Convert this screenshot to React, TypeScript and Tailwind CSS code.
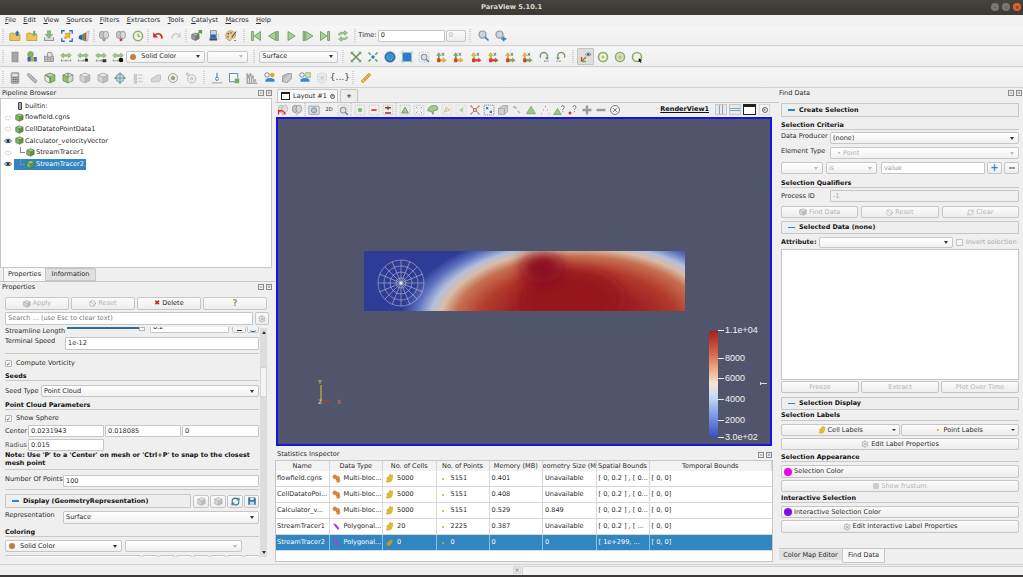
import type { ReactNode } from "react";
import { Ban, RefreshCw, Settings } from "lucide-react";

const folder = (
  <path d="M1 5V14H14.5V6H8L6.5 4H2Z" fill="#eec458" stroke="#a8862f" strokeWidth=".8" />
);
const cube = (a: string, b: string, c: string, s: string) => (
  <>
    <path d="M8 1.5 14.5 4V11.5L8 14.5 1.5 11.5V4Z" fill={b} stroke={s} strokeWidth=".8" />
    <path d="M1.5 4 8 6.8 14.5 4 8 1.5Z" fill={c} stroke={s} strokeWidth=".5" />
    <path d="M8 6.8V14.5L1.5 11.5V4Z" fill={a} stroke={s} strokeWidth=".5" />
  </>
);
const greenCube = cube("#7fb35f", "#5f9245", "#a2cc86", "#43682f");
const greyCube = cube("#d4d4d4", "#bdbdbd", "#e6e6e6", "#9a9a9a");
const grey = "#b4b4b4";
const green = "#86b070";
const greenDark = "#5f8f4c";
const vcr = (d: string) => <path d={d} fill="#a9cf94" stroke={greenDark} strokeWidth="1" />;
const srv = (dot: string) => (
  <>
    <ellipse cx="5.5" cy="6.5" rx="3.7" ry="5" fill="#c4c4c4" stroke="#8f8f8f" />
    <ellipse cx="10.5" cy="6.5" rx="3.7" ry="5" fill="#d6d6d6" stroke="#8f8f8f" />
    <circle cx="8" cy="13" r="2" fill={dot} />
  </>
);
const ring = (
  <>
    <circle cx="8" cy="8" r="6" fill="#f3f2e4" stroke={green} strokeWidth="2.2" />
    <circle cx="8" cy="8" r="2" fill="#d9b23c" />
  </>
);
const rangeArrow = (extra?: ReactNode) => (
  <>
    <path d="M1 6 4.5 3V5H11.5V3L15 6 11.5 9V7H4.5V9Z" fill="#a7cf90" stroke={greenDark} strokeWidth=".7" />
    <path d="M1 13H15M2 11V14M8 11V14M14 11V14" stroke="#777" strokeWidth=".8" fill="none" />
    {extra}
  </>
);
const axis = (up: string, across: string) => (
  <>
    <path d="M5 2 8 6H6V11H4V6H2Z" fill={up} stroke="#8f7a25" strokeWidth=".4" />
    <path d="M3 11H11V9L15 12.5 11 15V13.5H3Z" fill={across} stroke="#8f7a25" strokeWidth=".4" />
    <rect x="3" y="10" width="4" height="5" fill="#d33a2c" />
    <path d="M9 2.5 12 6.5M12 2.5 9 6.5" stroke="#444" strokeWidth=".9" />
  </>
);
const rot = (flip: boolean) => (
  <g transform={flip ? "matrix(-1 0 0 1 16 0)" : undefined}>
    <path d="M3.5 9A4.8 4.8 0 1 1 12 9" fill="none" stroke="#7c9a6c" strokeWidth="1.8" />
    <path d="M9.5 8.5H14.5L12 12Z" fill="#6d8a5e" />
    <path d="M8 13.5H14" stroke="#777" strokeWidth="1.4" strokeDasharray="1 .8" />
  </g>
);
const dashBox = (inner: ReactNode, c = "#b8b8b8") => (
  <>
    <rect x="1.5" y="1.5" width="13" height="13" fill="none" stroke={c} strokeDasharray="1.4 1.2" />
    {inner}
  </>
);
const mag = (c: string, h: string) => (
  <>
    <circle cx="6.5" cy="6.5" r="4.7" fill="#d8dde2" stroke={c} strokeWidth="1.7" />
    <path d="M10 10 14.5 14.5" stroke={h} strokeWidth="2.2" />
  </>
);

const icons: Record<string, ReactNode> = {
  open: (
    <>
      {folder}
      <path d="M11 .5 14.5 4.5H12.5V8H9.5V4.5H7.5Z" fill="#2a78b8" />
    </>
  ),
  load: (
    <>
      {folder}
      <path d="M11 8.5 14.5 4.5H12.5V1H9.5V4.5H7.5Z" fill="#79ab63" />
    </>
  ),
  save: (
    <>
      <path d="M2 9.5V14H14V9.5" fill="#ddd" stroke="#989898" strokeWidth="1.4" />
      <path d="M6 1H10V6H13L8 11 3 6H6Z" fill="#93bb80" stroke={greenDark} strokeWidth=".7" />
    </>
  ),
  auto: (
    <>
      <path d="M1 5V1H5M11 1H15V5M15 11V15H11M5 15H1V11" fill="none" stroke="#2b6fb0" strokeWidth="1.7" />
      <path d="M12.5 3.5 11 11 9 9 6 12 4 10 7 7 5 5Z" fill="#eeba2c" stroke="#a27f1a" strokeWidth=".6" />
    </>
  ),
  wedge: (
    <>
      <path d="M1 8 6 5.5V13.5L1 11.5Z" fill="#2c5aa8" />
      <path d="M6 5.5 9 4V14.5L6 13.5Z" fill="#3c9a4a" />
      <path d="M9 4 11 3V15L9 14.5Z" fill="#d8392b" />
      <path d="M11 3 15 1 13 15H11Z" fill="#dcdcdc" stroke="#888" strokeWidth=".5" />
    </>
  ),
  srvA: srv("#7aa866"),
  srvB: srv("#b34a44"),
  clock: (
    <>
      <circle cx="8" cy="8" r="6.2" fill="#f5f1dc" stroke={green} strokeWidth="2" />
      <path d="M8 4.5V8.5H11" fill="none" stroke="#6a8a58" strokeWidth="1.1" />
    </>
  ),
  undo: (
    <>
      <path d="M4.5 6.5C8 3.5 13 5 13.5 11.5" fill="none" stroke="#d42a22" strokeWidth="2.2" />
      <path d="M1.5 3V10H8Z" fill="#d42a22" />
    </>
  ),
  redo: (
    <g transform="matrix(-1 0 0 1 16 0)">
      <path d="M4.5 6.5C8 3.5 13 5 13.5 11.5" fill="none" stroke="#cfcfcf" strokeWidth="2.2" />
      <path d="M1.5 3V10H8Z" fill="#cfcfcf" />
    </g>
  ),
  cubeScript: (
    <>
      <g transform="translate(0 3) scale(.75)">{cube("#9a9a9a", "#777", "#b5b5b5", "#555")}</g>
      <path d="M8 6 13 1.5M10 1H14V5" fill="none" stroke="#5c9a4c" strokeWidth="1.8" />
    </>
  ),
  monitor: (
    <>
      <rect x="3" y="1" width="8" height="9.5" fill="#c9d6e4" stroke="#555" strokeWidth=".7" />
      <rect x="3.5" y="6" width="7" height="4.5" fill="#2c63b8" />
      <rect x="2" y="11" width="10" height="3" fill="#3b4e6c" />
      <path d="M13 6H15M13 9H15M13 12H15" stroke="#888" strokeWidth=".8" />
    </>
  ),
  palette: (
    <>
      <path d="M7.5 1C3 1 .8 4.5 1 8c.2 3.5 3 6.5 6 6 1.8-.3.5-2.5 2-3 2-.6 4.5.5 5-3C14.5 4.5 11.5 1 7.5 1Z" fill="#eccd97" stroke="#8a6a3c" strokeWidth=".7" />
      <circle cx="4.5" cy="5" r="1.3" fill="#c4392c" />
      <circle cx="8" cy="3.8" r="1.2" fill="#3a7fc2" />
      <circle cx="4" cy="9" r="1.2" fill="#4aa04a" />
      <path d="M15 2 9 9.5" stroke="#6a4a2c" strokeWidth="1.4" />
      <path d="M12 14H15" stroke="#444" strokeWidth=".8" />
    </>
  ),
  first: vcr("M2 2H4.5V14H2ZM14 2V14L5.5 8Z"),
  prev: vcr("M13 2H15V14H13ZM11.5 2V14L2 8Z"),
  play: vcr("M4 2 13.5 8 4 14Z"),
  next: vcr("M1.5 2H3.5V14H1.5ZM5 2V14L14.5 8Z"),
  last: vcr("M11.5 2H14V14H11.5ZM2 2V14L10.5 8Z"),
  loop: (
    <>
      <path d="M2 7C2 4 4 3 7 3H10V1L14 4 10 7V5H7C5 5 4 6 4 7.5" fill="#a9cf94" stroke={greenDark} strokeWidth=".7" />
      <path d="M14 9C14 12 12 13 9 13H6V15L2 12 6 9V11H9C11 11 12 10 12 8.5" fill="#a9cf94" stroke={greenDark} strokeWidth=".7" />
    </>
  ),
  zoomData: (
    <>
      <circle cx="6" cy="6" r="4.7" fill="#cdd4dc" stroke="#8f98a2" strokeWidth="1.6" />
      <path d="M9.5 9.5 14 14" stroke="#2d7fc4" strokeWidth="2.2" />
    </>
  ),
  zoomPlus: (
    <>
      <circle cx="6" cy="6" r="4.7" fill="#cdd4dc" stroke="#8f98a2" strokeWidth="1.6" />
      <path d="M11.5 8.5V15M8.5 11.8H15" stroke="#2d7fc4" strokeWidth="2.2" />
    </>
  ),
  calcGrey: <rect x="4" y="1.5" width="8" height="13" fill="#a6a6a6" stroke="#8c8c8c" />,
  rescale: (
    <>
      <circle cx="6" cy="4.5" r="3.8" fill="#84b666" stroke="#4f7f3c" strokeWidth=".6" />
      <rect x="2" y="8" width="4.5" height="6" fill="#2f67b3" />
      <rect x="6.5" y="8" width="4" height="6" fill="#d4a92c" />
      <rect x="10.5" y="8" width="4" height="6" fill="#3b77c2" />
    </>
  ),
  lockGrey: (
    <>
      <rect x="2" y="7" width="12" height="7" fill="#c2c2c2" stroke="#888" />
      <circle cx="9" cy="5" r="3.5" fill="#e2e2e2" stroke="#777" />
      <path d="M2 11H14M6 7V14M10 7V14" stroke="#888" strokeWidth=".6" />
    </>
  ),
  range: rangeArrow(),
  rangeC: rangeArrow(<circle cx="12.5" cy="12" r="2.3" fill="#333" />),
  rangeT: rangeArrow(<path d="M10 11H15V15H10Z" fill="#333" />),
  rangeD: rangeArrow(<circle cx="12" cy="12" r="3" fill="#111" />),
  reset: (
    <>
      <path d="M3 3 13 13M13 3 3 13" stroke="#6c8a5e" strokeWidth="2" />
      <path d="M1 1H5L1 5ZM15 1V5L11 1ZM1 15V11L5 15ZM15 15H11L15 11Z" fill="#6aa158" />
    </>
  ),
  closest: (
    <>
      <circle cx="8" cy="8" r="2.3" fill="#2d7fc4" />
      <path d="M2 2 5 5M14 2 11 5M2 14 5 11M14 14 11 11" stroke="#6aa158" strokeWidth="2.2" />
    </>
  ),
  sphere: (
    <>
      <circle cx="8" cy="8" r="7" fill="#2b79bf" stroke="#1f5f99" strokeWidth=".6" />
      <circle cx="8" cy="8" r="4" fill="#3b8ed0" stroke="#a9cf94" strokeDasharray="1.5 1.5" />
    </>
  ),
  blueSq: (
    <>
      <rect x="2" y="2" width="12" height="12" rx="2" fill="#2b7fca" />
      <path d="M1 1H4M12 1H15M1 15H4M12 15H15M1 1V4M15 1V4M1 12V15M15 12V15" stroke="#a9cf94" strokeWidth="1.2" />
    </>
  ),
  zoomBox: dashBox(<g transform="translate(3 3) scale(.8)">{mag("#8c98a4", "#4786bb")}</g>),
  px: axis("#79ab63", "#eeba2c"),
  mx: axis("#79ab63", "#eeba2c"),
  py: axis("#eeba2c", "#d33a2c"),
  my: axis("#eeba2c", "#d33a2c"),
  pz: axis("#eeba2c", "#79ab63"),
  mz: axis("#eeba2c", "#79ab63"),
  rotP: rot(false),
  rotM: rot(true),
  camera: (
    <>
      <path d="M2 14 8 8" stroke="#a97c28" strokeWidth="1.8" fill="none" />
      <path d="M2 8V14" stroke="#d8392b" strokeWidth="1.8" />
      <path d="M2 14H8" stroke="#6aa158" strokeWidth="1.8" />
      <path d="M7 4.5C9 2 13 2 15 4.5 13 7 9 7 7 4.5Z" fill="#d8dde2" stroke="#555" strokeWidth=".7" />
      <circle cx="11" cy="4.5" r="1.5" fill="#2c4f80" />
    </>
  ),
  ring,
  ringDot: (
    <>
      {ring}
      <circle cx="8" cy="8" r="3.2" fill="none" stroke="#8a8a4a" strokeWidth=".6" />
    </>
  ),
  ringCursor: (
    <>
      <circle cx="8" cy="8" r="6" fill="#f3f2e4" stroke={green} strokeWidth="2.2" />
      <path d="M10.5 9.5 15 12.5 12.8 13 14 15.5H12.5L11.5 13.5 10 15Z" fill="#111" />
    </>
  ),
  calc: (
    <>
      <rect x="3" y="1" width="10" height="14" rx="1" fill="#b5b5b5" stroke="#7c7c7c" />
      <rect x="4.5" y="2.5" width="7" height="3" fill="#e5e5e5" />
      <path d="M5 7.5H6.5M7.5 7.5H9M10 7.5H11.5M5 10H6.5M7.5 10H9M10 10H11.5M5 12.5H6.5M7.5 12.5H9M10 12.5H11.5" stroke="#555" strokeWidth="1.3" />
    </>
  ),
  capsule: (
    <>
      <path d="M4 2 14 11C15.5 13 13 15.5 11 14L2 5C1 3 2.5 1 4 2Z" fill="#bebebe" stroke="#909090" />
      <path d="M6 3 14 12M4 5 12 14" stroke="#8c8c8c" strokeWidth=".5" />
    </>
  ),
  cubeG: (
    <>
      {cube("#eaeaea", "#8fbf71", "#b9d8a4", "#4f6b42")}
      <path d="M3 5 8 8V13" stroke="#43682f" fill="none" />
    </>
  ),
  cubeH: (
    <>
      {cube("#8fbf71", "#d8d8d8", "#d4e4c8", "#4f6b42")}
      <path d="M8 2V7" stroke="#43682f" />
    </>
  ),
  cubeGrey: greyCube,
  globe: (
    <>
      <circle cx="8" cy="8" r="5.5" fill="#c7d3dc" stroke="#4d88b8" strokeWidth="1.2" />
      <path d="M8 1V15M1 8H15" stroke="#6c8fa8" />
      <circle cx="8" cy="1.8" r="1.3" fill="#79ab63" />
      <circle cx="8" cy="14.2" r="1.3" fill="#79ab63" />
      <circle cx="1.8" cy="8" r="1.3" fill="#79ab63" />
      <circle cx="14.2" cy="8" r="1.3" fill="#79ab63" />
    </>
  ),
  listG: (
    <path d="M3 3H6V6H3ZM8 4H14M3 7.5H6V10.5H3ZM8 8.5H14M3 12H6V15H3ZM8 13H14" stroke={grey} fill="#dfdfdf" />
  ),
  wedgeG: <path d="M2 13V9L10 4H14V10L12 13Z" fill="#d6d6d6" stroke={grey} />,
  dial: (
    <>
      <circle cx="8" cy="8" r="6" fill="#eee" stroke="#9a9a9a" strokeWidth="1.2" />
      <circle cx="8" cy="8" r="2.5" fill="#86b070" stroke="#777" strokeWidth=".5" />
    </>
  ),
  dial2: (
    <>
      <circle cx="9" cy="9" r="5.5" fill="#f1f1f1" stroke={grey} strokeWidth="1.2" />
      <circle cx="3.5" cy="3" r="1.8" fill="#ddd" stroke={grey} />
      <circle cx="9" cy="9" r="1.8" fill="#ddd" stroke={grey} />
    </>
  ),
  plotLine: (
    <>
      <path d="M1 14.5H15" stroke="#888" />
      <path d="M8 1V12" stroke="#2d7fc4" strokeWidth="1.4" />
      <circle cx="8" cy="9" r="2" fill="#fff" stroke="#2d7fc4" />
    </>
  ),
  plotBox: (
    <>
      <rect x="2" y="2" width="11" height="11" fill="#f4f4f4" stroke="#5f87ad" strokeWidth="1.2" />
      <rect x="9" y="9" width="6" height="6" fill="#79ab63" />
    </>
  ),
  hist: <path d="M2 15V8H4V15ZM5 15V2H7V15ZM8 15V5H10V15ZM11 15V10H13V15ZM1 1V15.5H15.5" fill="#a8a8a8" stroke="#8c8c8c" strokeWidth=".5" />,
  timeA: (
    <>
      <circle cx="4" cy="4" r="3" fill="#f2f2f2" stroke="#333" strokeWidth=".7" />
      <circle cx="11" cy="4" r="3" fill="#d9a62e" />
      <path d="M2 10C6 7.5 10 7.5 14 10V13H2Z" fill="#3d87c8" />
    </>
  ),
  stripes: (
    <>
      <path d="M2 13V5L9 2 14 2V9L9 14Z" fill="#bdbdbd" stroke="#909090" />
      <path d="M4 12 13 3M6 13 14 5" stroke="#e9e9e9" />
    </>
  ),
  timeB: (
    <>
      <circle cx="4" cy="4" r="3" fill="#f2f2f2" stroke="#333" strokeWidth=".7" />
      <rect x="9" y="1" width="6" height="6" fill="#cfe0c8" stroke="#79ab63" />
      <path d="M2 10C6 7.5 10 7.5 14 10V13H2Z" fill="#3d87c8" />
    </>
  ),
  shield: (
    <>
      <path d="M8 1 14 3V9C14 12 11 14 8 15 5 14 2 12 2 9V3Z" fill="#ececec" stroke="#d2d2d2" />
      <path d="M8 4V12M4.5 6 11.5 10M11.5 6 4.5 10" stroke="#c8c8c8" />
    </>
  ),
  ruler: (
    <>
      <path d="M1.5 12 12 1.5 14.5 4 4 14.5Z" fill="#e9bb45" stroke="#a48229" strokeWidth=".8" />
      <path d="M5 9 6.5 10.5M7.5 6.5 9 8M10 4 11.5 5.5" stroke="#8f6f1e" strokeWidth=".8" />
    </>
  ),
  camUndo: (
    <>
      <g opacity=".6">{srv("#999")}</g>
      <path d="M2 14V9H7M3 9.5C6 8 10 9 11 14" fill="none" stroke="#d42a22" strokeWidth="1.7" />
    </>
  ),
  camRedo: srv("#c5c5c5"),
  shot: (
    <>
      <rect x="1" y="3" width="14" height="11" rx="1" fill="#d9dde2" stroke="#9a9a9a" />
      <circle cx="8" cy="8.5" r="3.5" fill="#b8c4cf" stroke="#6a8096" />
      <path d="M1 1.5H15" stroke="#bbb" strokeDasharray="1.5 1.5" />
    </>
  ),
  sel1: dashBox(<circle cx="8" cy="8" r="3" fill="#8ab87a" />),
  sel2: dashBox(<rect x="4.5" y="7" width="7" height="2.2" fill="#c8382f" />),
  sel3: dashBox(<path d="M4 5H12M8 3V8M4 12H12" stroke="#8c3a30" strokeWidth="1.7" />),
  sel4: dashBox(<path d="M8 4 12.5 12H3.5Z" fill="#a5c68f" stroke="#6a8e58" />),
  sel5: dashBox(<path d="M4 4 6 6M12 4 10 6M4 12 6 10M12 12 10 10" stroke="#8f8f8f" />),
  sel6: <path d="M1 9C1 4 6 2 10 2 14 2 15 5 14 8L9 9 8 14 6 10Z" fill="#a5c68f" stroke="#6a8e58" />,
  sel7: dashBox(<path d="M4 11 7 4 12 8Z" fill="#ecdcc8" stroke="#c9b49a" />, "#d4c7b4"),
  sel8: dashBox(<path d="M5 8 11 4V12Z" fill="#b6cfa4" />, "#cfcfcf"),
  sel9: <path d="M2 2 5 5M14 2 11 5M2 14 5 11M14 14 11 11M6 6H10V10H6Z" stroke="#b8806a" strokeWidth="1.5" fill="#e4c8b8" />,
  sel10: dashBox(<path d="M4 4H7V7H4ZM9 9H12V12H9Z" fill="#2d7fc4" />, "#666"),
  sel11: <path d="M2 13V6L8 2H14V10L10 14H2ZM2 6H10V14M10 6 14 2" fill="#cfcfcf" stroke="#a0a0a0" />,
  hover: <path d="M3 3 6 6M4.5 3 7.5 6M9 9 12 12" stroke="#b4b4b4" strokeWidth="1.5" />,
  tri: <path d="M8 3 14 13H2Z" fill="#9fc58a" stroke={greenDark} strokeWidth=".8" />,
  triDots: <path d="M8 3.5H8.8M3 13H3.8M13 13H13.8M5.5 8H6.3M10.5 8H11.3" stroke="#555" strokeWidth="1.6" />,
  triQ: (
    <>
      <path d="M6 6 11 14H1Z" fill="#9fc58a" stroke={greenDark} strokeWidth=".8" />
      <path d="M11 4C11 1.5 15 1.5 15 4 15 6 13 6 13 8M13 9.5V11" fill="none" stroke="#666" strokeWidth="1.1" />
    </>
  ),
  dotQ: (
    <>
      <circle cx="4" cy="12" r="2" fill="#c8382f" />
      <path d="M8 4C8 1.5 12 1.5 12 4 12 6 10 6 10 8M10 9.5V11" fill="none" stroke="#666" strokeWidth="1.1" />
    </>
  ),
  plus: <path d="M8 2V14M2 8H14" stroke="#9a9a9a" strokeWidth="3.2" />,
  minus: <path d="M2 8H14" stroke="#9a9a9a" strokeWidth="3.2" />,
  circX: (
    <>
      <circle cx="8" cy="8" r="6" fill="#f4f4f4" stroke="#777" strokeWidth="1.3" />
      <path d="M5.5 5.5 10.5 10.5M10.5 5.5 5.5 10.5" stroke="#777" strokeWidth="1.3" />
    </>
  ),
  multi: (
    <>
      <circle cx="5" cy="5" r="3.5" fill="#e8853a" stroke="#b45c1e" strokeWidth=".6" />
      <circle cx="10" cy="7.5" r="3.5" fill="#e8853a" stroke="#b45c1e" strokeWidth=".6" />
      <circle cx="11" cy="12" r="3" fill="#e8853a" stroke="#b45c1e" strokeWidth=".6" />
    </>
  ),
  cells: (
    <path d="M3 7 8 3 8 1 14 2 13 9 11 13 5 15 2 13 4 10Z" fill="#e8b928" stroke="#a9851a" strokeWidth=".6" />
  ),
  cellsDim: <path d="M3 9 9 3 14 3 13 9 8 14 3 14Z" fill="#b89a3c" stroke="#8a7427" strokeWidth=".6" />,
  poly: (
    <>
      <path d="M2 3 8 5 13 11 11 14 6 9Z" fill="#a43fd0" />
      <path d="M2 3 7 3 8 6Z" fill="#e83fa8" />
    </>
  ),
};

function Ic({ n, s = 12 }: { n: string; s?: number }) {
  return (
    <svg viewBox="0 0 16 16" width={s} height={s} className="shrink-0">
      {icons[n]}
    </svg>
  );
}

function Grip({ w = 6 }: { w?: number }) {
  return (
    <div className="flex justify-center shrink-0" style={{ width: w }}>
      <div className="h-[13px] w-[2px] border-x border-dotted border-[#d2d2d2]" />
    </div>
  );
}

function Cells({ items, w = 17.5 }: { items: (string | number)[]; w?: number }) {
  return (
    <>
      {items.map((it, i) =>
        typeof it === "number" ? (
          <Grip key={i} w={it} />
        ) : (
          <div key={i} className="flex justify-center shrink-0" style={{ width: w }}>
            <Ic n={it} />
          </div>
        ),
      )}
    </>
  );
}

function Caret({ dim }: { dim?: boolean }) {
  return (
    <span
      className={`ml-auto shrink-0 border-x-[2.5px] border-t-[3px] border-x-transparent ${
        dim ? "border-t-[#bbbbbb]" : "border-t-[#333333]"
      }`}
    />
  );
}

function Combo({ label, className = "", dim, icon }: { label?: string; className?: string; dim?: boolean; icon?: ReactNode }) {
  return (
    <div
      className={`flex items-center gap-[3px] rounded-[2px] border border-[#c6c6c6] bg-gradient-to-b from-white to-[#f0f0f0] pr-[4px] shrink-0 ${
        dim ? "text-[#b0b0b0]" : ""
      } ${className || ""}`}
    >
      {icon}
      {label && <span className="truncate pl-[2px]">{label}</span>}
      <Caret dim={dim} />
    </div>
  );
}

function Field({ value = "", className = "", dim }: { value?: string; className?: string; dim?: boolean }) {
  return (
    <div
      className={`flex items-center rounded-[1px] border border-[#c6c6c6] px-[2px] shrink-0 ${
        dim ? "bg-[#f0f0f0] text-[#a8a8a8]" : "bg-white"
      } ${className}`}
    >
      {value}
    </div>
  );
}

function Btn({ children, className = "", dim }: { children?: ReactNode; className?: string; dim?: boolean }) {
  return (
    <div
      className={`flex items-center justify-center gap-[2px] rounded-[2px] border border-[#c6c6c6] bg-gradient-to-b from-[#fbfbfb] to-[#ededed] shrink-0 ${
        dim ? "text-[#b4b4b4]" : ""
      } ${className}`}
    >
      {children}
    </div>
  );
}

function Head({ title, className = "" }: { title: string; className?: string }) {
  return (
    <div className={`h-[8px] shrink-0 whitespace-nowrap border-b border-[#c8c8c8] text-[6.4px] font-bold text-[#111] ${className}`}>{title}</div>
  );
}

function Bar({ title, className = "" }: { title: string; className?: string }) {
  return (
    <div className={`flex shrink-0 items-center gap-[4px] rounded-[1px] border border-[#c6c6c6] bg-[#eeeeee] pl-[6px] text-[6.4px] font-bold text-[#111] ${className}`}>
      <span className="h-[1.5px] w-[7px] bg-[#2e83c4]" />
      {title}
    </div>
  );
}

function DockTitle({ title, className = "" }: { title: string; className?: string }) {
  return (
    <div className={`flex shrink-0 items-center justify-between ${className}`}>
      <span>{title}</span>
      <div className="flex gap-[2px]">
        <span className="flex size-[6px] items-center justify-center border border-[#8a8a8a] text-[4px] text-[#666]">▫</span>
        <span className="flex size-[6px] items-center justify-center border border-[#8a8a8a] text-[4px] text-[#444]">×</span>
      </div>
    </div>
  );
}

function Check({ label }: { label: string }) {
  return (
    <div className="flex items-center gap-[4px]">
      <span className="flex size-[7px] items-center justify-center rounded-[1px] border border-[#b5b5b5] bg-white text-[6px] font-bold">✓</span>
      {label}
    </div>
  );
}

function Eye({ on }: { on?: boolean }) {
  return (
    <svg viewBox="0 0 12 8" width="8" height="6" className="shrink-0">
      {on ? (
        <>
          <path d="M.5 4C3 .5 9 .5 11.5 4 9 7.5 3 7.5 .5 4Z" fill="#fff" stroke="#222" />
          <circle cx="6" cy="4" r="2.5" fill="#123a6c" />
        </>
      ) : (
        <path d="M.5 4C3 .5 9 .5 11.5 4 9 7.5 3 7.5 .5 4Z" fill="#fff" stroke="#aaa" strokeDasharray="1.5 1" />
      )}
    </svg>
  );
}

const tree = [
  { name: "builtin:", eye: 0, icon: "builtin", child: false },
  { name: "flowfield.cgns", eye: 1, icon: "cube", child: false },
  { name: "CellDatatoPointData1", eye: 1, icon: "cube", child: false },
  { name: "Calculator_velocityVector", eye: 2, icon: "cube", child: false },
  { name: "StreamTracer1", eye: 1, icon: "cube", child: true },
  { name: "StreamTracer2", eye: 2, icon: "cube", child: true, sel: true },
];

function PipelineRow({ r }: { r: (typeof tree)[number] }) {
  return (
    <div className="flex h-[11.7px] items-center">
      <div className="flex w-[13px] justify-center pl-[1px]">{r.eye > 0 && <Eye on={r.eye === 2} />}</div>
      <div className={`flex h-[11px] items-center ${r.sel ? "w-[72px] bg-[#2f86c1] text-white" : ""}`}>
        {r.child && <span className="ml-[6px] h-[6px] w-[5px] self-start border-b border-l border-[#888]" />}
        <span className="flex w-[11px] shrink-0 justify-center">
          {r.icon === "builtin" ? (
            <span className="h-[8px] w-[4px] rounded-[1px] border border-[#444] bg-[#aaa]" />
          ) : (
            <svg viewBox="0 0 16 16" width="9" height="9">{greenCube}</svg>
          )}
        </span>
        <span className="whitespace-nowrap">{r.name}</span>
      </div>
    </div>
  );
}

function Properties() {
  const label = "self-start pt-[1px] shrink-0";
  return (
    <div className="relative h-[230px] overflow-hidden pl-[5px] pr-[15px]">
      <div className="flex h-[7px] items-start">
        <span className="w-[62px] shrink-0 whitespace-nowrap leading-[8px]">Streamline Length</span>
        <div className="flex h-[3px] w-[78px] shrink-0 items-start">
          <span className="h-[2px] w-[72px] bg-[#2e6c9c]" />
          <span className="h-[4px] w-[6px] border border-[#b5b5b5] bg-white" />
        </div>
        <Field value="0.2" className="ml-[5px] -mt-[5px] h-[11px] w-[79px]" />
        <Btn className="ml-[3px] -mt-[5px] h-[11px] w-[14px]">
          <span className="mt-[6px] h-[1px] w-[5px] bg-[#333]" />
        </Btn>
        <Btn className="ml-[1px] -mt-[5px] h-[11px] w-[12px]">
          <span className="mt-[6px] h-[2px] w-[6px] rounded-b-full border-b border-[#2e6c9c]" />
        </Btn>
      </div>
      <div className="mt-[3px] flex h-[13px] items-center">
        <span className={`w-[60px] ${label}`}>Terminal Speed</span>
        <Field value="1e-12" className="h-[13px] w-[194px]" />
      </div>
      <div className="mt-[3px] h-px w-[254px] bg-[#c8c8c8]" />
      <div className="mt-[5px] flex h-[9px] items-center"><Check label="Compute Vorticity" /></div>
      <Head title="Seeds" className="mt-[5px] w-[254px]" />
      <div className="mt-[4px] flex h-[12px] items-center">
        <span className="w-[36px] shrink-0">Seed Type</span>
        <Combo label="Point Cloud" className="h-[12px] w-[218px]" />
      </div>
      <Head title="Point Cloud Parameters" className="mt-[5px] w-[254px]" />
      <div className="mt-[4px] flex h-[9px] items-center"><Check label="Show Sphere" /></div>
      <div className="mt-[2px] flex h-[12px] items-center gap-[1px]">
        <span className="w-[22px] shrink-0">Center</span>
        <Field value="0.0231943" className="h-[12px] w-[76px]" />
        <Field value="0.018085" className="h-[12px] w-[76px]" />
        <Field value="0" className="h-[12px] w-[77px]" />
      </div>
      <div className="mt-[2px] flex h-[12px] items-center gap-[1px]">
        <span className="w-[22px] shrink-0 text-[#555]">Radius</span>
        <Field value="0.015" className="h-[12px] w-[76px]" />
      </div>
      <div className="mt-[1px] w-[254px] text-[6.4px] font-bold leading-[7.6px] text-[#111]">
        Note: Use 'P' to a 'Center' on mesh or 'Ctrl+P' to snap to the closest
        <br />
        mesh point
      </div>
      <div className="mt-[2px] h-px w-[254px] bg-[#c8c8c8]" />
      <div className="mt-[5px] flex h-[12px] items-center">
        <span className={`w-[58px] ${label}`}>Number Of Points</span>
        <Field value="100" className="h-[12px] w-[196px]" />
      </div>
      <div className="mt-[2px] h-px w-[254px] bg-[#c8c8c8]" />
      <div className="mt-[4px] flex h-[14px] items-center gap-[1px]">
        <Bar title="Display (GeometryRepresentation)" className="h-[14px] w-[186px]" />
        <Btn className="ml-[1px] h-[13px] w-[16px]" dim><Ic n="cubeGrey" s={9} /></Btn>
        <Btn className="h-[13px] w-[16px]" dim><Ic n="cubeGrey" s={9} /></Btn>
        <Btn className="h-[13px] w-[16px]">
          <RefreshCw size={9} strokeWidth={3} color="#2e6f9e" />
        </Btn>
        <Btn className="h-[13px] w-[15px]">
          <svg viewBox="0 0 16 16" width="10" height="10">
            <path d="M2 2H12L14 4V14H2Z" fill="#2e6f9e" />
            <rect x="5" y="2.5" width="6" height="4" fill="#dfe8ef" />
            <rect x="4.5" y="9" width="7" height="5" fill="#cfdce6" />
          </svg>
        </Btn>
      </div>
      <div className="mt-[3px] flex h-[13px] items-center">
        <span className={`w-[58px] ${label}`}>Representation</span>
        <Combo label="Surface" className="h-[13px] w-[196px]" />
      </div>
      <Head title="Coloring" className="mt-[5px] w-[254px]" />
      <div className="mt-[3px] flex h-[12px] items-center gap-[3px]">
        <Combo
          label="Solid Color"
          className="h-[12px] w-[117px] pl-[3px]"
          icon={<span className="size-[6px] rounded-full bg-[#c17f3e]" />}
        />
        <Combo className="h-[12px] w-[117px]" dim />
      </div>
      <div className="mt-[3px] flex h-[8px] gap-[1px]">
        <Btn className="h-[10px] w-[136px]" />
        {[0, 1, 2, 3, 4, 5, 6].map((k) => (
          <Btn key={k} className="h-[10px] w-[16px]" />
        ))}
      </div>
      <div className="absolute right-[8px] top-[1px] bottom-0 flex w-[7px] flex-col items-center bg-[#dddddd]">
        <span className="mt-[3px] border-x-[2px] border-b-[3px] border-x-transparent border-b-[#333]" />
        <div className="mt-[33px] h-[30px] w-full border border-[#d4d4d4] bg-[#f4f4f4]" />
        <span className="mb-[3px] mt-auto border-x-[2px] border-t-[3px] border-x-transparent border-t-[#333]" />
      </div>
    </div>
  );
}

const cols = ["Name", "Data Type", "No. of Cells", "No. of Points", "Memory (MB)", "eometry Size (M", "Spatial Bounds", "Temporal Bounds"];
const rows = [
  ["flowfield.cgns", "Multi-bloc...", "5000", "5151", "0.401", "Unavailable", "[ 0, 0.2 ] , [ 0..."],
  ["CellDatatoPoi...", "Multi-bloc...", "5000", "5151", "0.408", "Unavailable", "[ 0, 0.2 ] , [ 0..."],
  ["Calculator_v...", "Multi-bloc...", "5000", "5151", "0.529", "0.849", "[ 0, 0.2 ] , [ 0..."],
  ["StreamTracer1", "Polygonal...", "20", "2225", "0.387", "Unavailable", "[ 0, 0.2 ] , [ ..."],
  ["StreamTracer2", "Polygonal...", "0", "0", "0", "0", "[ 1e+299, ..."],
];
const grid = "grid grid-cols-[53.5px_53.5px_53.5px_53px_53.5px_53.5px_53px_1fr]";

function Stats() {
  return (
    <div className="flex h-[102px] w-[498px] flex-col border border-[#c6c6c6] bg-white">
      <div className={`${grid} h-[10px] bg-[#f2f2f2]`}>
        {cols.map((c) => (
          <div key={c} className="flex items-center justify-center overflow-hidden whitespace-nowrap border-r border-[#d8d8d8]">{c}</div>
        ))}
      </div>
      {rows.map((r, i) => {
        const sel = i === 4;
        const line = sel ? "border-[#8cc0e4]" : "border-[#d8d8d8]";
        return (
          <div key={r[0]} className={`${grid} h-[16px] border-b border-[#d8d8d8] ${sel ? "bg-[#2f86c1] text-white" : ""}`}>
            <div className={`flex items-center border-r pl-[1px] ${line}`}>{r[0]}</div>
            <div className={`flex items-center gap-[3px] border-r pl-[2px] ${line}`}>
              <Ic n={i < 3 ? "multi" : "poly"} s={9} />
              {r[1]}
            </div>
            <div className={`flex items-center gap-[3px] border-r pl-[2px] ${line}`}>
              <Ic n={sel ? "cellsDim" : "cells"} s={9} />
              {r[2]}
            </div>
            <div className={`flex items-center gap-[7px] border-r pl-[5px] ${line}`}>
              <span className="size-[2px] rounded-full bg-[#e0a030]" />
              {r[3]}
            </div>
            <div className={`flex items-center border-r pl-[2px] ${line}`}>{r[4]}</div>
            <div className={`flex items-center border-r pl-[2px] ${line}`}>{r[5]}</div>
            <div className={`flex items-center overflow-hidden whitespace-nowrap border-r pl-[2px] ${line}`}>{r[6]}</div>
            <div className="flex items-center pl-[2px]">[ 0, 0]</div>
          </div>
        );
      })}
    </div>
  );
}

function Field3D() {
  const spokes = [0, 22.5, 45, 67.5, 90, 112.5, 135, 157.5];
  return (
    <svg viewBox="0 0 321 60" className="absolute left-[86px] top-[132px] h-[60px] w-[321px]">
      <defs>
        <radialGradient id="dome" gradientUnits="userSpaceOnUse" cx="0" cy="0" r="1" gradientTransform="translate(215 72) scale(178 95)">
          <stop offset="0" stopColor="#97161f" />
          <stop offset=".38" stopColor="#a02024" />
          <stop offset=".56" stopColor="#b33a2c" />
          <stop offset=".7" stopColor="#c67052" />
          <stop offset=".78" stopColor="#d8bca6" />
          <stop offset=".84" stopColor="#b4bfdd" />
          <stop offset=".92" stopColor="#5d72c0" />
          <stop offset="1" stopColor="#2e3c98" />
        </radialGradient>
        <filter id="soft" x="-60%" y="-60%" width="220%" height="220%"><feGaussianBlur stdDeviation="7" /></filter>
        <clipPath id="clip"><rect width="321" height="60" /></clipPath>
      </defs>
      <g clipPath="url(#clip)">
        <rect width="321" height="60" fill="#2e3c98" />
        <ellipse cx="215" cy="72" rx="178" ry="95" fill="url(#dome)" />
        <ellipse cx="205" cy="48" rx="52" ry="30" fill="#96141f" filter="url(#soft)" />
        <ellipse cx="178" cy="17" rx="21" ry="15" fill="#8a0820" filter="url(#soft)" />
        <g fill="none" stroke="#cfcfcf" strokeWidth=".5" transform="translate(37 32)">
          {[23, 17, 11, 5].map((r) => (
            <circle key={r} r={r} />
          ))}
          {spokes.map((a) => (
            <path key={a} d="M-23 0H23" transform={`rotate(${a})`} />
          ))}
        </g>
        <circle cx="37" cy="32" r="1.5" fill="#eee" />
      </g>
    </svg>
  );
}

const ticks = [
  { t: "1.1e+04", y: 206 },
  { t: "8000", y: 234 },
  { t: "6000", y: 254 },
  { t: "4000", y: 275 },
  { t: "2000", y: 296 },
  { t: "3.0e+02", y: 313 },
];

function RenderView() {
  return (
    <div className="relative ml-[1px] mt-[1px] h-[329px] w-[496px] shrink-0 border-2 border-[#1414e6] bg-[#51556b]">
      <Field3D />
      <div className="absolute left-[431px] top-[212px] h-[106px] w-[9px] bg-[linear-gradient(to_bottom,#a81d20,#d05a40_18%,#eda77f_35%,#f2e6d8_50%,#c6dcf5_62%,#7fa2ea_78%,#3a4cc0)]" />
      {ticks.map((k) => (
        <div
          key={k.t}
          className="absolute left-[440px] flex h-[10px] items-center gap-[1px] whitespace-nowrap [font-family:'Liberation_Sans',sans-serif] text-[9px] text-[#f2f2f2]"
          style={{ top: k.y }}
        >
          <span className="h-px w-[6px] bg-[#e8e8e8]" />
          {k.t}
        </div>
      ))}
      <div className="absolute left-[482px] top-[263px] flex h-[3px] w-[7px] items-center">
        <span className="h-[3px] w-px bg-[#ddd]" />
        <span className="h-px w-[6px] bg-[#ddd]" />
      </div>
      <svg viewBox="0 0 30 26" className="absolute left-[38px] top-[260px] h-[26px] w-[30px]">
        <path d="M5 22V6" stroke="#d8c83c" strokeWidth="1" />
        <path d="M5 22H14" stroke="#c03a30" strokeWidth="1" />
        <path d="M5 22V24" stroke="#7fa060" strokeWidth="1" />
      </svg>
      <span className="absolute left-[40px] top-[260px] text-[6px] text-[#e8dc60]">Y</span>
      <span className="absolute left-[40px] top-[280px] text-[6px] text-[#cfcfcf]">Z</span>
      <span className="absolute left-[59px] top-[280px] text-[6px] text-[#e07060]">X</span>
    </div>
  );
}

export default function App() {
  return (
    <div className="flex h-[577px] w-[1023px] flex-col overflow-hidden bg-[#efefef] [font-family:'DejaVu_Sans',sans-serif] text-[6.55px] leading-none text-[#2b2b2b]">
      <div className="relative flex h-[15px] shrink-0 items-center justify-center bg-gradient-to-b from-[#45433e] to-[#3a3934] text-[6.7px] font-bold text-[#dfdbd2]">
        ParaView 5.10.1
        <div className="absolute right-[2px] top-[3px] flex gap-[3px]">
          <span className="flex size-[8px] items-center justify-center rounded-full bg-[#7a7873] text-[5px] text-[#3a3934]">–</span>
          <span className="flex size-[8px] items-center justify-center rounded-full bg-[#7a7873] text-[5px] text-[#3a3934]">▫</span>
          <span className="flex size-[8px] items-center justify-center rounded-full bg-[#e2622b] text-[5px] text-[#3a3934]">×</span>
        </div>
      </div>
      <div className="flex h-[11px] shrink-0 items-center gap-[7.4px] bg-[#f2f2f2] pl-[5px]">
        {["File", "Edit", "View", "Sources", "Filters", "Extractors", "Tools", "Catalyst", "Macros", "Help"].map((m) => (
          <span key={m}>
            <u>{m[0]}</u>
            {m.slice(1)}
          </span>
        ))}
      </div>

      <div className="flex h-[20px] shrink-0 items-center border-b border-[#d2d2d2] bg-gradient-to-b from-[#f6f6f6] to-[#eeeeee]">
        <Grip />
        <Cells w={17.3} items={["open", "load", "save", "auto", "wedge", 2.6, "srvA", "srvB", "clock", 2.6, "undo", "redo", 4, "cubeScript", "monitor", "palette", 7.5, "first", "prev", "play", "next", "last", "loop", 7]} />
        <span className="w-[19.5px] shrink-0">Time:</span>
        <Field value="0" className="h-[12px] w-[67px]" />
        <Btn className="ml-[1px] h-[12px] w-[20px] justify-start pl-[2px]" dim>0</Btn>
        <Grip w={9} />
        <Cells items={["zoomData", "zoomPlus"]} />
      </div>
      <div className="mt-px flex h-[20px] shrink-0 items-center border-b border-[#d2d2d2] bg-gradient-to-b from-[#f6f6f6] to-[#eeeeee]">
        <Grip />
        <Cells w={17.2} items={["calcGrey", "rescale", "lockGrey", "range", "rangeC", "rangeT", "rangeD"]} />
        <Combo
          label="Solid Color"
          className="h-[12px] w-[79px] pl-[3px]"
          icon={<span className="size-[6px] rounded-full bg-[#c17f3e]" />}
        />
        <Combo className="ml-[2px] h-[12px] w-[41px]" dim />
        <Grip w={11} />
        <Combo label="Surface" className="h-[12px] w-[79px]" />
        <Grip w={9} />
        <Cells w={17.1} items={["reset", "closest", "sphere", "blueSq", "zoomBox", "px", "mx", "py", "my", "pz", "mz", "rotP", "rotM", 7.6]} />
        <div className="flex size-[17px] shrink-0 items-center justify-center rounded-[1px] border border-[#c4c4c4] bg-[#dddddd]"><Ic n="camera" /></div>
        <Cells w={17} items={["ring", "ringDot", "ringCursor"]} />
      </div>
      <div className="mt-px flex h-[20px] shrink-0 items-center border-b border-[#d2d2d2] bg-gradient-to-b from-[#f6f6f6] to-[#eeeeee]">
        <Grip />
        <Cells w={17.6} items={["calc", "capsule", "cubeG", "cubeH", "cubeGrey", "cubeGrey", "globe", "listG", "wedgeG", "dial", "dial2", 8.4, "plotLine", "plotBox", "hist", "timeA", "stripes", "timeB", "shield"]} />
        <span className="flex w-[17.6px] shrink-0 justify-center text-[9px] text-[#444]">{"{...}"}</span>
        <Grip w={9} />
        <Cells items={["ruler"]} />
      </div>

      <div className="flex min-h-0 flex-1">
        <div className="flex w-[275px] shrink-0 flex-col">
          <DockTitle title="Pipeline Browser" className="h-[10px] pl-[2px] pr-[3px]" />
          <div className="h-[170px] w-[272px] shrink-0 border border-[#c6c6c6] bg-white pt-[1px]">
            {tree.map((r) => <PipelineRow key={r.name} r={r} />)}
          </div>
          <div className="flex h-[14px] shrink-0 items-end border-b border-[#c6c6c6] pl-[3px]">
            <div className="flex h-[14px] w-[43px] items-center justify-center rounded-t-[2px] border border-b-0 border-[#c6c6c6] bg-[#f8f8f8]">Properties</div>
            <div className="flex h-[13px] w-[50px] items-center justify-center rounded-t-[2px] border border-l-0 border-[#c6c6c6] bg-[#e0e0e0]">Information</div>
          </div>
          <DockTitle title="Properties" className="h-[10px] pl-[2px] pr-[3px]" />
          <div className="mt-[5px] flex gap-[2px] pl-[5px]">
            <Btn className="h-[13px] w-[64px]" dim>
              <Ic n="cubeGrey" s={8} />Apply
            </Btn>
            <Btn className="h-[13px] w-[64px]" dim>
              <Ban size={7} color="#999" />Reset
            </Btn>
            <Btn className="h-[13px] w-[64px] text-[#222]">
              <span className="text-[7px] font-bold text-[#d81e1e]">✖</span>Delete
            </Btn>
            <Btn className="h-[13px] w-[64px]">
              <span className="text-[8px] font-bold text-[#7ea35e]">?</span>
            </Btn>
          </div>
          <div className="mt-[2px] flex gap-[2px] pl-[5px]">
            <Field value="Search ... (use Esc to clear text)" className="h-[13px] w-[248px] text-[#777]" />
            <Btn className="h-[13px] w-[14px]" dim>
              <Settings size={8} color="#999" />
            </Btn>
          </div>
          <div className="mt-[2px]"><Properties /></div>
        </div>

        <div className="flex w-[504px] shrink-0 flex-col">
          <div className="mt-[2px] flex h-[13px] shrink-0 items-end border-b border-[#c6c6c6] pl-[2px]">
            <div className="flex h-[13px] w-[61px] items-center gap-[3px] rounded-t-[2px] border border-b-0 border-[#c6c6c6] bg-[#f8f8f8] pl-[3px]">
              <span className="h-[8px] w-[9px] border border-t-2 border-[#222] bg-white" />
              Layout #1
              <span className="flex size-[5px] items-center justify-center rounded-full border border-[#555] text-[4px]">×</span>
            </div>
            <div className="ml-[2px] flex h-[13px] w-[18px] items-center justify-center rounded-t-[2px] border border-b-0 border-[#c6c6c6] bg-[#ededed] font-bold">+</div>
          </div>
          <div className="flex h-[13px] shrink-0 items-center pl-[1px]">
            <Cells w={14} items={["camUndo", "camRedo", 2.5, "shot"]} />
            <Btn className="ml-[2px] h-[11px] w-[13px] border-transparent bg-none text-[5px]">2D</Btn>
            <Cells w={14} items={["zoomBox", 3, "sel1", "sel2", "sel3", 3, "sel4", "sel5", "sel6", "sel7", "sel8", "sel9", "sel10", "sel11", "hover", "tri", "triDots", "triQ", "dotQ", "plus", "minus", "circX"]} />
            <span className="ml-auto mr-[6px] font-bold text-[#111] underline">RenderView1</span>
            <div className="mr-[9px] flex shrink-0 gap-[2px]">
              <span className="h-[11px] w-[12px] border border-[#c6c6c6] bg-[#e8e8e8] px-[3px]"><span className="block h-full w-full border-x border-[#7fa8c4]" /></span>
              <span className="h-[11px] w-[12px] border border-[#c6c6c6] bg-[#e8e8e8] py-[3px]"><span className="block h-full w-full border-y border-[#7fa8c4]" /></span>
              <span className="h-[11px] w-[13px] border border-t-[3px] border-[#222] bg-white" />
              <span className="ml-[1px] flex h-[11px] w-[11px] items-center justify-center border border-[#d8d8d8] bg-[#f4f4f4]">
                <span className="flex size-[6px] items-center justify-center rounded-full border border-[#666] text-[4px]">×</span>
              </span>
            </div>
          </div>
          <RenderView />
          <DockTitle title="Statistics Inspector" className="mt-[4px] h-[9px] w-[497px] pl-[2px]" />
          <div className="mt-[1px]"><Stats /></div>
        </div>

        <div className="flex min-w-0 flex-1 flex-col">
          <DockTitle title="Find Data" className="h-[10px] pr-[1px]" />
          <div className="flex flex-col pl-[2px] pr-[4px]">
            <Bar title="Create Selection" className="mt-[5px] h-[14px]" />
            <Head title="Selection Criteria" className="mt-[5px]" />
            <div className="mt-[2px] flex h-[12px] shrink-0 items-center">
              <span className="w-[49px] shrink-0 self-start pt-[1px]">Data Producer</span>
              <Combo label="(none)" className="h-[12px] flex-1" />
            </div>
            <div className="mt-[3px] flex h-[12px] shrink-0 items-center">
              <span className="w-[49px] shrink-0 self-start pt-[1px]">Element Type</span>
              <Combo label="•  Point" className="h-[12px] flex-1 pl-[4px]" dim />
            </div>
            <div className="mt-[3px] flex h-[12px] shrink-0 items-center">
              <Combo className="h-[12px] w-[42px]" dim />
              <Combo label="is" className="ml-[3px] h-[12px] w-[51px]" dim />
              <Field value="value" className="ml-[4px] h-[12px] w-[104px] text-[#999]" />
              <Btn className="ml-[2px] h-[12px] w-[15px]">
                <span className="text-[10px] font-bold text-[#2e83c4]">+</span>
              </Btn>
              <Btn className="ml-[2px] h-[12px] flex-1">
                <span className="h-[1.5px] w-[6px] bg-[#999]" />
              </Btn>
            </div>
            <Head title="Selection Qualifiers" className="mt-[6px]" />
            <div className="mt-[2px] flex h-[12px] shrink-0 items-center">
              <span className="w-[49px] shrink-0">Process ID</span>
              <Field value="-1" className="h-[12px] flex-1" dim />
            </div>
            <div className="mt-[4px] flex gap-[3px]">
              <Btn className="h-[12px] flex-1" dim><Ic n="cubeGrey" s={8} />Find Data</Btn>
              <Btn className="h-[12px] flex-1" dim><Ban size={7} color="#aaa" />Reset</Btn>
              <Btn className="h-[12px] flex-1" dim><RefreshCw size={7} color="#aaa" />Clear</Btn>
            </div>
            <Bar title="Selected Data (none)" className="mt-[3px] h-[13px]" />
            <div className="mt-[3px] flex h-[11px] shrink-0 items-center">
              <span className="w-[38px] shrink-0 text-[6.4px] font-bold text-[#222]">Attribute:</span>
              <Combo className="h-[11px] w-[134px]" />
              <span className="ml-[3px] flex items-center gap-[3px] whitespace-nowrap text-[#aaa]">
                <span className="size-[7px] border border-[#c6c6c6] bg-[#f4f4f4]" />Invert selection
              </span>
            </div>
            <div className="mt-[1px] h-[131px] shrink-0 border border-[#c6c6c6] bg-white" />
            <div className="mt-[1px] flex gap-[2px]">
              <Btn className="h-[12px] flex-1" dim>Freeze</Btn>
              <Btn className="h-[12px] flex-1" dim>Extract</Btn>
              <Btn className="h-[12px] flex-1" dim>Plot Over Time</Btn>
            </div>
            <Bar title="Selection Display" className="mt-[4px] h-[13px]" />
            <Head title="Selection Labels" className="mt-[2px] !h-[9px]" />
            <div className="mt-[3px] flex gap-[1px]">
              <Btn className="relative h-[12px] flex-1">
                <Ic n="cells" s={8} />Cell Labels
                <span className="absolute right-[3px] border-x-[2px] border-t-[2.5px] border-x-transparent border-t-[#333]" />
              </Btn>
              <Btn className="relative h-[12px] flex-1">
                <span className="mr-[3px] size-[2px] rounded-full bg-[#e0a030]" />Point Labels
                <span className="absolute right-[3px] border-x-[2px] border-t-[2.5px] border-x-transparent border-t-[#333]" />
              </Btn>
            </div>
            <Btn className="mt-[2px] h-[12px]">
              <Settings size={8} color="#999" />Edit Label Properties
            </Btn>
            <Head title="Selection Appearance" className="mt-[4px]" />
            <Btn className="mt-[3px] h-[13px] justify-start pl-[2px]">
              <span className="size-[8px] rounded-full bg-[#f000f0]" />Selection Color
            </Btn>
            <Btn className="mt-[2px] h-[12px]" dim>
              <span className="size-[6px] rounded-[1px] bg-[#ccc]" />Show frustum
            </Btn>
            <Head title="Interactive Selection" className="mt-[3px]" />
            <Btn className="mt-[3px] h-[12px] justify-start pl-[2px]">
              <span className="size-[8px] rounded-full bg-[#7a10ef]" />Interactive Selection Color
            </Btn>
            <Btn className="mt-[2px] h-[13px]">
              <Settings size={8} color="#999" />Edit Interactive Label Properties
            </Btn>
          </div>
          <div className="mt-[15px] flex h-[15px] shrink-0 border-t border-[#c6c6c6]">
            <div className="mt-[1px] flex h-[10px] w-[63px] items-center justify-center bg-[#e0e0e0]">Color Map Editor</div>
            <div className="flex h-[14px] w-[43px] items-center justify-center rounded-b-[2px] border border-t-0 border-[#c6c6c6] bg-[#f8f8f8]">Find Data</div>
          </div>
        </div>
      </div>

      <div className="flex h-[11px] shrink-0 items-center border-t border-[#d2d2d2] pl-[513px]">
        <span className="flex h-[8px] w-[8px] items-center justify-center border border-[#d8d8d8] bg-[#e4e4e4] text-[6px] text-[#777]">×</span>
        <span className="ml-[1px] h-[9px] flex-1 border-l border-t border-[#d2d2d2] bg-[#f2f2f2]" />
      </div>
      <div className="h-[2px] shrink-0 bg-[#3a3934]" />
    </div>
  );
}
